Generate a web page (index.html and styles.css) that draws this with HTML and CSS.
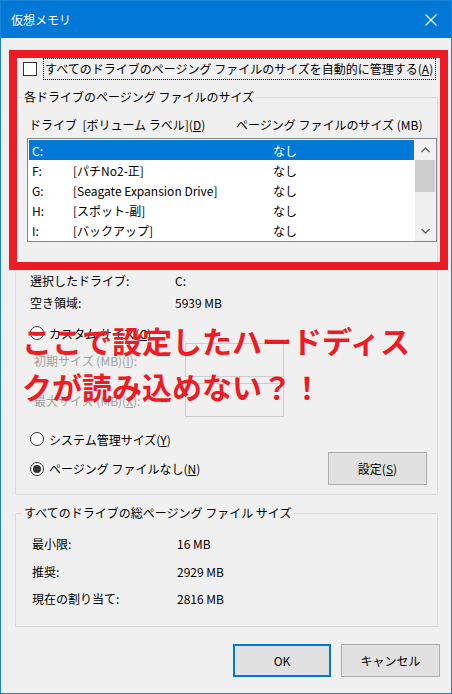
FILE: index.html
```html
<!DOCTYPE html>
<html lang="ja">
<head>
<meta charset="utf-8">
<title>仮想メモリ</title>
<link rel="stylesheet" href="styles.css">
</head>
<body>
<div class="window">
  <div class="titlebar">
    <span class="title">仮想メモリ</span>
    <svg class="close" width="12" height="12" viewBox="0 0 12 12"><path d="M0.5 0.5 L11.5 11.5 M11.5 0.5 L0.5 11.5" stroke="#fff" stroke-width="1.1" fill="none"/></svg>
  </div>
  <div class="content">
    <div class="auto-row">
      <span class="checkbox"></span>
      <span class="focus">すべてのドライブのページング ファイルのサイズを自動的に管理する(<u>A</u>)</span>
    </div>

    <fieldset class="group group-drives">
      <legend>各ドライブのページング ファイルのサイズ</legend>
      <div class="group-body drives-body">
        <div class="col-head">
          <span class="ch1">ドライブ&nbsp; [ボリューム ラベル](<u>D</u>)</span>
          <span>ページング ファイルのサイズ (MB)</span>
        </div>
        <div class="listbox">
          <div class="rows">
            <div class="row sel"><span class="d">C:</span><span class="l"></span><span>なし</span></div>
            <div class="row"><span class="d">F:</span><span class="l">[パチNo2-正]</span><span>なし</span></div>
            <div class="row"><span class="d">G:</span><span class="l">[Seagate Expansion Drive]</span><span>なし</span></div>
            <div class="row"><span class="d">H:</span><span class="l">[スポット-副]</span><span>なし</span></div>
            <div class="row"><span class="d">I:</span><span class="l">[バックアップ]</span><span>なし</span></div>
          </div>
          <div class="scrollbar">
            <div class="sb-btn"><svg width="9" height="6" viewBox="0 0 9 6"><path d="M0.5 5 L4.5 1 L8.5 5" stroke="#606060" stroke-width="1.4" fill="none"/></svg></div>
            <div class="sb-thumb"></div>
            <div class="sb-space"></div>
            <div class="sb-btn"><svg width="9" height="6" viewBox="0 0 9 6"><path d="M0.5 1 L4.5 5 L8.5 1" stroke="#606060" stroke-width="1.4" fill="none"/></svg></div>
          </div>
        </div>

        <div class="info-row first"><span class="info-label">選択したドライブ:</span><span>C:</span></div>
        <div class="info-row second"><span class="info-label">空き領域:</span><span>5939 MB</span></div>

        <div class="radio-row custom"><span class="radio"></span><span>カスタム サイズ(<u>C</u>):</span></div>
        <div class="size-row first-size"><span class="size-label">初期サイズ (MB)(<u>I</u>):</span><span class="edit"></span></div>
        <div class="size-row second-size"><span class="size-label">最大サイズ (MB)(<u>X</u>):</span><span class="edit"></span></div>

        <div class="radio-row system"><span class="radio"></span><span>システム管理サイズ(<u>Y</u>)</span></div>
        <div class="radio-row none-row">
          <span class="radio-wrap"><span class="radio checked"></span><span>ページング ファイルなし(<u>N</u>)</span></span>
          <span class="btn set-btn">設定(<u>S</u>)</span>
        </div>
      </div>
    </fieldset>

    <fieldset class="group group-total">
      <legend>すべてのドライブの総ページング ファイル サイズ</legend>
      <div class="group-body total-body">
        <div class="total-row r1"><span class="total-label">最小限:</span><span>16 MB</span></div>
        <div class="total-row r2"><span class="total-label">推奨:</span><span>2929 MB</span></div>
        <div class="total-row r3"><span class="total-label">現在の割り当て:</span><span>2816 MB</span></div>
      </div>
    </fieldset>

    <div class="buttons">
      <span class="btn ok">OK</span>
      <span class="btn">キャンセル</span>
    </div>
  </div>

  <div class="red-box"></div>
  <div class="red-text">ここで設定したハードディス<br>クが読み込めない？！</div>
</div>
</body>
</html>
```

FILE: styles.css
```css
* { box-sizing: border-box; }
html, body { margin: 0; padding: 0; }
body {
  width: 452px;
  height: 694px;
  overflow: hidden;
  background: #f0f0f0;
  font-family: "Noto Sans CJK JP", "Noto Sans", sans-serif;
  font-size: 12px;
  color: #000;
}
u { text-decoration: underline; text-underline-offset: 1px; }

.window {
  position: relative;
  width: 452px;
  height: 694px;
  border: 1px solid #1883d7;
  background: #f0f0f0;
  display: flex;
  flex-direction: column;
}

.titlebar {
  height: 37px;
  flex: none;
  background: #0078d7;
  color: #fff;
  display: flex;
  align-items: center;
  justify-content: space-between;
  padding: 0 14px 0 10px;
}
.title { line-height: 16px; }
.close { display: block; }

.content {
  padding: 20px 13px 0 14px;
  display: flex;
  flex-direction: column;
}

.auto-row {
  display: flex;
  align-items: center;
  height: 22px;
  padding-left: 8px;
}
.checkbox {
  width: 14px;
  height: 14px;
  border: 1px solid #333;
  background: #fff;
  margin-right: 6px;
  flex: none;
}
.focus {
  height: 22px;
  line-height: 20px;
  border: 1px dotted #000;
  padding: 0 2px 0 1px;
  white-space: nowrap;
}

.group {
  margin: 9px 0 0;
  padding: 0;
  border: 1px solid #dcdcdc;
  min-width: 0;
}
.group legend {
  margin-left: 6px;
  padding: 0 2px;
  line-height: 16px;
  white-space: nowrap;
}
.group-total { margin-top: 10px; }

.drives-body { padding: 9px 0 9px 11px; }

.col-head {
  display: flex;
  align-items: center;
  height: 20px;
  padding-left: 2px;
  white-space: nowrap;
}
.ch1 { width: 207px; }

.listbox {
  margin-top: 4px;
  height: 104px;
  border: 1px solid #828790;
  background: #fff;
  display: flex;
}
.rows { flex: 1; padding: 1px; }
.row {
  height: 20px;
  display: flex;
  align-items: center;
  padding-left: 3px;
  white-space: nowrap;
}
.row .d { width: 41px; }
.row .l { width: 200px; }
.row.sel { background: #0078d7; color: #fff; }

.scrollbar {
  width: 21px;
  flex: none;
  background: #f0f0f0;
  display: flex;
  flex-direction: column;
}
.sb-btn {
  height: 21px;
  display: flex;
  align-items: center;
  justify-content: center;
}
.sb-btn svg { display: block; }
.sb-thumb { height: 32px; background: #cdcdcd; margin-right: 1px; }
.sb-space { flex: 1; }

.info-row {
  display: flex;
  align-items: center;
  height: 20px;
  padding-left: 3px;
}
.info-row.first { margin-top: 28px; }
.info-row.second { margin-top: 2px; }
.info-label { width: 145px; }

.radio-row {
  display: flex;
  align-items: center;
  height: 20px;
  padding-left: 3px;
}
.radio-row.custom { margin-top: 11px; }
.radio-row.system { margin-top: 12px; }
.radio-row.none-row {
  margin-top: 3px;
  height: 33px;
  justify-content: space-between;
  padding-right: 10px;
}
.radio-wrap { display: flex; align-items: center; }
.radio {
  width: 14px;
  height: 14px;
  border: 1px solid #333;
  border-radius: 50%;
  background: #fff;
  margin-right: 5px;
  flex: none;
  display: flex;
  align-items: center;
  justify-content: center;
}
.radio.checked::after {
  content: "";
  width: 8px;
  height: 8px;
  border-radius: 50%;
  background: #333;
}

.size-row {
  display: flex;
  align-items: center;
  padding-left: 7px;
  color: #a0a0a0;
}
.size-row.second-size { margin-top: 6px; }
.size-label { width: 151px; }
.edit {
  width: 99px;
  height: 34px;
  border: 1px solid #cccccc;
  background: #f0f0f0;
}

.btn {
  width: 99px;
  height: 33px;
  border: 1px solid #adadad;
  background: #e1e1e1;
  display: flex;
  align-items: center;
  justify-content: center;
}
.btn.ok { border: 2px solid #0078d7; width: 98px; }

.total-body { padding: 0 0 18px 16px; }
.total-row {
  display: flex;
  align-items: center;
  height: 20px;
}
.total-row.r1 { margin-top: 12px; }
.total-row.r2 { margin-top: 8px; }
.total-row.r3 { margin-top: 7px; }
.total-label { width: 145px; }

.buttons {
  display: flex;
  justify-content: flex-end;
  gap: 10px;
  margin-top: 17px;
  margin-right: -2px;
}

.red-box {
  position: absolute;
  left: 8px;
  top: 49px;
  width: 439px;
  height: 220px;
  border: 8px solid #ed1c24;
}
.red-text {
  position: absolute;
  left: 21px;
  top: 316px;
  font-size: 30px;
  line-height: 46px;
  font-weight: bold;
  color: #ed1c24;
  white-space: nowrap;
}
```
